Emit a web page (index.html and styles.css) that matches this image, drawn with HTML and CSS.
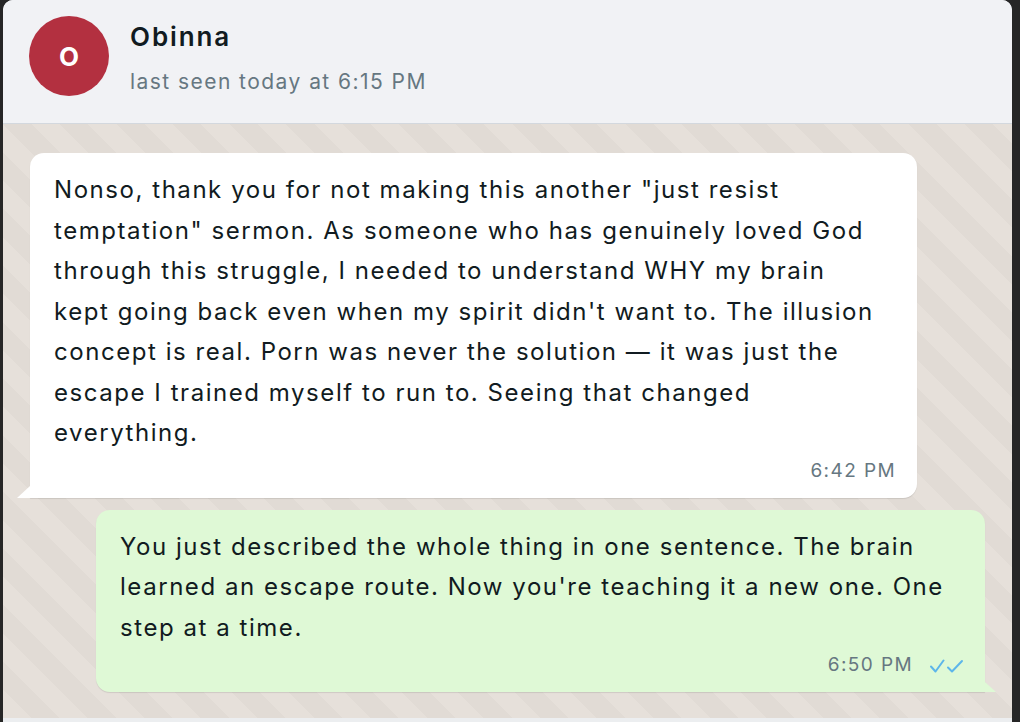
FILE: index.html
```html
<!DOCTYPE html>
<html lang="en">
<head>
<meta charset="utf-8">
<title>Obinna</title>
<link rel="stylesheet" href="styles.css">
</head>
<body>
<div class="card">
  <header class="chat-header">
    <div class="avatar">O</div>
    <div class="contact">
      <div class="name">Obinna</div>
      <div class="status">last seen today at 6:15 PM</div>
    </div>
  </header>
  <main class="chat">
    <div class="bubble incoming">
      <p class="text">Nonso, thank you for not making this another "just resist temptation" sermon. As someone who has genuinely loved God through this struggle, I needed to understand WHY my brain kept going back even when my spirit didn't want to. The illusion concept is real. Porn was never the solution — it was just the escape I trained myself to run to. Seeing that changed everything.</p>
      <div class="meta"><span class="time">6:42 PM</span></div>
    </div>
    <div class="bubble outgoing">
      <p class="text">You just described the whole thing in one sentence. The brain learned an escape route. Now you're teaching it a new one. One step at a time.</p>
      <div class="meta">
        <span class="time">6:50 PM</span>
        <svg class="ticks" width="34" height="14" viewBox="0 0 34 14" aria-hidden="true">
          <path d="M1 7.5 L5.5 12.5 L13.5 1.5" fill="none" stroke="#5db6ea" stroke-width="2" stroke-linecap="round" stroke-linejoin="round"/>
          <path d="M18 8.5 L22 12.5 L32 2" fill="none" stroke="#5db6ea" stroke-width="2" stroke-linecap="round" stroke-linejoin="round"/>
        </svg>
      </div>
    </div>
  </main>
  <div class="composer-edge"></div>
</div>
</body>
</html>
```

FILE: styles.css
```css
* { box-sizing: border-box; }

html, body {
  margin: 0;
  height: 100%;
}

body {
  background: #262626;
  font-family: Inter, "Noto Sans", "Liberation Sans", sans-serif;
  color: #111b21;
  overflow: hidden;
}

.card {
  margin-left: 3px;
  width: 1009px;
  height: 722px;
  border-radius: 10px 10px 0 0;
  overflow: hidden;
  display: flex;
  flex-direction: column;
  background: #f0f2f5;
}

.chat-header {
  display: flex;
  align-items: flex-start;
  gap: 21px;
  padding: 16px 24px 0 26px;
  background: #f1f2f5;
  border-bottom: 1px solid #d3d8de;
  height: 124px;
  flex: none;
}

.avatar {
  width: 80px;
  height: 80px;
  border-radius: 50%;
  background: #b33040;
  color: #fff;
  font-weight: 700;
  font-size: 26px;
  display: flex;
  align-items: center;
  justify-content: center;
  flex: none;
}

.contact {
  display: flex;
  flex-direction: column;
  gap: 16px;
  padding-top: 5px;
}

.name {
  font-size: 26px;
  font-weight: 600;
  line-height: 32px;
  letter-spacing: 1.9px;
  color: #111b21;
}

.status {
  font-size: 21px;
  line-height: 26px;
  letter-spacing: 1.45px;
  color: #667781;
}

.chat {
  flex: 1;
  display: flex;
  flex-direction: column;
  gap: 12px;
  padding: 29px 27px 0 27px;
  background-color: #e4ded8;
  background-image: repeating-linear-gradient(45deg,
    #e6e0da 0px, #e6e0da 20px,
    #e1dbd5 20px, #e1dbd5 40px);
}

.bubble {
  position: relative;
  width: 887px;
  border-radius: 14px;
  padding: 17px 24px 12px 24px;
  box-shadow: 0 1px 1px rgba(0, 0, 0, 0.10);
}

.bubble.incoming {
  align-self: flex-start;
  background: #ffffff;
  border-bottom-left-radius: 0;
}

.bubble.incoming::after {
  content: "";
  position: absolute;
  left: -13px;
  bottom: 0;
  width: 0;
  height: 0;
  border-bottom: 12px solid #ffffff;
  border-left: 13px solid transparent;
}

.bubble.outgoing {
  align-self: flex-end;
  width: 889px;
  background: #dff9d6;
  border-bottom-right-radius: 0;
}

.bubble.outgoing::after {
  content: "";
  position: absolute;
  right: -11px;
  bottom: 0;
  width: 0;
  height: 0;
  border-bottom: 10px solid #dff9d6;
  border-right: 11px solid transparent;
}

.text {
  margin: 0;
  padding-right: 16px;
  font-size: 24px;
  line-height: 40.5px;
  letter-spacing: 1.55px;
  color: #111b21;
}

.meta {
  display: flex;
  justify-content: flex-end;
  align-items: center;
  gap: 17px;
  margin-top: 2px;
  margin-right: -3px;
}

.outgoing .meta {
  margin-right: -3px;
}

.time {
  font-size: 19px;
  line-height: 30px;
  letter-spacing: 1.4px;
  color: #667781;
}

.ticks {
  display: block;
  margin-top: 1px;
}

.composer-edge {
  height: 4px;
  background: #eceef0;
  flex: none;
}
```
